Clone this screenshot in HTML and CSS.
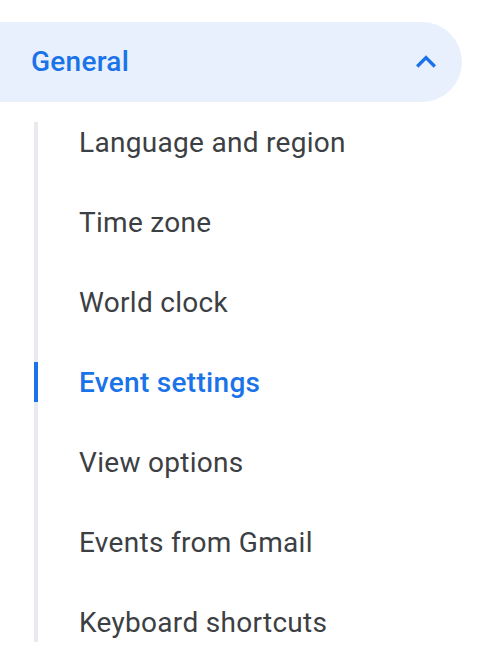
FILE: index.html
```html
<!DOCTYPE html>
<html>
<head>
<meta charset="utf-8">
<link rel="stylesheet" href="styles.css">
</head>
<body>
<div class="group">
  <div class="group-head">
    <span class="group-title">General</span>
    <svg class="chev" viewBox="0 0 24 24" width="40" height="40"><path d="M12 8l-6 6 1.41 1.41L12 10.83l4.59 4.58L18 14z" fill="#1a73e8"/></svg>
  </div>
  <ul class="items">
    <li class="item">Language and region</li>
    <li class="item">Time zone</li>
    <li class="item">World clock</li>
    <li class="item active">Event settings</li>
    <li class="item">View options</li>
    <li class="item">Events from Gmail</li>
    <li class="item">Keyboard shortcuts</li>
  </ul>
</div>
</body>
</html>
```

FILE: styles.css
```css
html, body {
  margin: 0;
  padding: 0;
  background: #ffffff;
  font-family: Roboto, "Liberation Sans", sans-serif;
}
.group {
  padding-top: 22px;
}
.group-head {
  width: 462px;
  height: 80px;
  box-sizing: border-box;
  background: #e8f0fe;
  border-radius: 0 40px 40px 0;
  display: flex;
  align-items: center;
  justify-content: space-between;
  padding-left: 31px;
  padding-right: 16px;
}
.group-title {
  font-size: 28px;
  font-weight: 500;
  color: #1a73e8;
  letter-spacing: 0.25px;
  line-height: 42px;
}
.chev {
  display: block;
}
.items {
  list-style: none;
  margin: 20px 0 0 34px;
  padding: 0;
  border-left: 4px solid #e8eaed;
  display: flex;
  flex-direction: column;
  gap: 40px;
}
.item {
  height: 40px;
  line-height: 42px;
  padding-left: 41px;
  font-size: 28px;
  color: #3c4043;
  letter-spacing: 0.3px;
}
.item.active {
  margin-left: -4px;
  border-left: 4px solid #1a73e8;
  color: #1a73e8;
  font-weight: 500;
}
```
